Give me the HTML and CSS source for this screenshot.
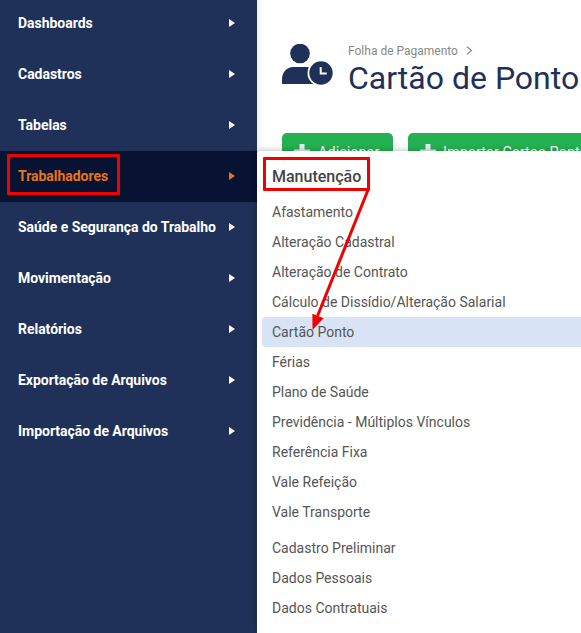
FILE: index.html
```html
<!DOCTYPE html>
<html lang="pt-BR">
<head>
<meta charset="utf-8">
<title>Cartão de Ponto</title>
<link rel="stylesheet" href="styles.css">
</head>
<body>
<div class="app">
  <nav class="sidebar">
    <a class="nav-item"><span>Dashboards</span><i class="caret"></i></a>
    <a class="nav-item"><span>Cadastros</span><i class="caret"></i></a>
    <a class="nav-item"><span>Tabelas</span><i class="caret"></i></a>
    <a class="nav-item active"><span>Trabalhadores</span><i class="caret"></i></a>
    <a class="nav-item"><span>Saúde e Segurança do Trabalho</span><i class="caret"></i></a>
    <a class="nav-item"><span>Movimentação</span><i class="caret"></i></a>
    <a class="nav-item"><span>Relatórios</span><i class="caret"></i></a>
    <a class="nav-item"><span>Exportação de Arquivos</span><i class="caret"></i></a>
    <a class="nav-item"><span>Importação de Arquivos</span><i class="caret"></i></a>
  </nav>
  <main class="content">
    <header class="page-head">
      <svg class="page-icon" width="51" height="42" viewBox="0 0 51 42">
        <circle cx="18" cy="9.500" r="9.800" fill="#1f3158"/>
        <path d="M0 40v-5c0-7 5-12 11-12h14c6 0 11 5 11 12v5z" fill="#1f3158"/>
        <circle cx="39" cy="29" r="13.500" fill="#fff"/>
        <circle cx="39" cy="29" r="11.700" fill="#1f3158"/>
        <path d="M38.700 23v6.500h6" fill="none" stroke="#fff" stroke-width="2"/>
      </svg>
      <div class="titles">
        <div class="crumb">Folha de Pagamento <svg class="crumb-sep" width="7" height="9" viewBox="0 0 7 9"><path d="M1 .8l4.500 3.700L1 8.200" fill="none" stroke="#888" stroke-width="1.200"/></svg></div>
        <h1>Cartão de Ponto</h1>
      </div>
    </header>
    <div class="actions">
      <button class="btn btn-add"><svg class="plus" width="16" height="16" viewBox="0 0 16 16"><path d="M5.500 0h5v5.500H16v5h-5.500V16h-5v-5.500H0v-5h5.500z" fill="#fff" opacity=".85"/></svg>Adicionar</button>
      <button class="btn btn-import"><svg class="plus" width="16" height="16" viewBox="0 0 16 16"><path d="M5.500 0h5v5.500H16v5h-5.500V16h-5v-5.500H0v-5h5.500z" fill="#fff" opacity=".85"/></svg>Importar Cartao Ponto</button>
    </div>
  </main>
  <section class="flyout">
    <h2>Manutenção</h2>
    <ul class="menu-group">
      <li>Afastamento</li>
      <li>Alteração Cadastral</li>
      <li>Alteração de Contrato</li>
      <li>Cálculo de Dissídio/Alteração Salarial</li>
      <li class="current">Cartão Ponto</li>
      <li>Férias</li>
      <li>Plano de Saúde</li>
      <li>Previdência - Múltiplos Vínculos</li>
      <li>Referência Fixa</li>
      <li>Vale Refeição</li>
      <li>Vale Transporte</li>
    </ul>
    <ul class="menu-group">
      <li>Cadastro Preliminar</li>
      <li>Dados Pessoais</li>
      <li>Dados Contratuais</li>
    </ul>
  </section>
  <div class="mark mark-nav"></div>
  <div class="mark mark-head"></div>
  <svg class="arrow" width="581" height="633" viewBox="0 0 581 633">
    <line x1="368" y1="190" x2="317.500" y2="316" stroke="#f00000" stroke-width="3"/>
    <polygon points="312.500,330 312.400,313.800 323.600,318.200" fill="#f00000"/>
  </svg>
</div>
</body>
</html>
```
FILE: styles.css
```css
* { box-sizing: border-box; }
html, body { margin: 0; height: 100%; overflow: hidden; }
body { font-family: Roboto, "Liberation Sans", sans-serif; background: #fff; }
.app { position: relative; display: flex; width: 581px; height: 633px; overflow: hidden; }

.sidebar { flex: 0 0 257px; background: #1f3158; margin-top: -2px; height: 635px; }
.nav-item { display: flex; align-items: center; justify-content: space-between; height: 51px; padding: 0 22px 2px 18px; color: #fff; font-size: 14px; font-weight: 700; letter-spacing: -.03px; }
.nav-item.active { background: #081232; color: #e8751a; }
.caret { width: 0; height: 0; border-left: 6px solid currentColor; border-top: 4.5px solid transparent; border-bottom: 4.5px solid transparent; }

.content { flex: 1; min-width: 0; padding: 42px 0 0 25px; box-shadow: inset 8px 0 8px -8px rgba(0,0,0,.12); }
.page-head { display: flex; align-items: flex-start; gap: 15px; height: 91px; }
.page-icon { margin-top: 2px; flex: none; }
.titles { min-width: 0; white-space: nowrap; }
.crumb { font-size: 12px; line-height: 18px; color: #888; }
.crumb-sep { margin-left: 5px; }
h1 { margin: 0; font-size: 32px; line-height: 36px; font-weight: 400; color: #1f3158; }
.actions { display: flex; gap: 15px; white-space: nowrap; }
.btn { display: inline-flex; align-items: center; gap: 8px; height: 38px; padding: 0 12px; border: 0; border-radius: 5px; background: #25b052; color: #fff; font: 400 14.5px Roboto, sans-serif; flex: none; }
.btn-add { width: 111px; }
.btn-import { gap: 7px; }

.flyout { position: absolute; left: 257px; top: 151px; width: 324px; height: 482px; background: #fff; border-radius: 4px 0 0 0; padding: 5px 0 0 5px; box-shadow: 0 0 6px rgba(0,0,0,.3); color: #555; font-size: 14px; }
.flyout h2 { margin: 0; padding: 1px 0 0 10px; height: 41px; line-height: 40px; font-size: 16px; font-weight: 500; color: #444; }
.menu-group { list-style: none; margin: 0 0 6px; padding: 0; }
.menu-group li { height: 30px; line-height: 30px; padding-left: 10px; }
.menu-group li.current { background: #d8e4f5; border-radius: 4px 0 0 4px; }

.mark { position: absolute; border: 3px solid #f00000; border-radius: 1px; }
.mark-nav { left: 7px; top: 154px; width: 113px; height: 41px; }
.mark-head { left: 263px; top: 157px; width: 107px; height: 34px; }
.arrow { position: absolute; left: 0; top: 0; pointer-events: none; }
```
